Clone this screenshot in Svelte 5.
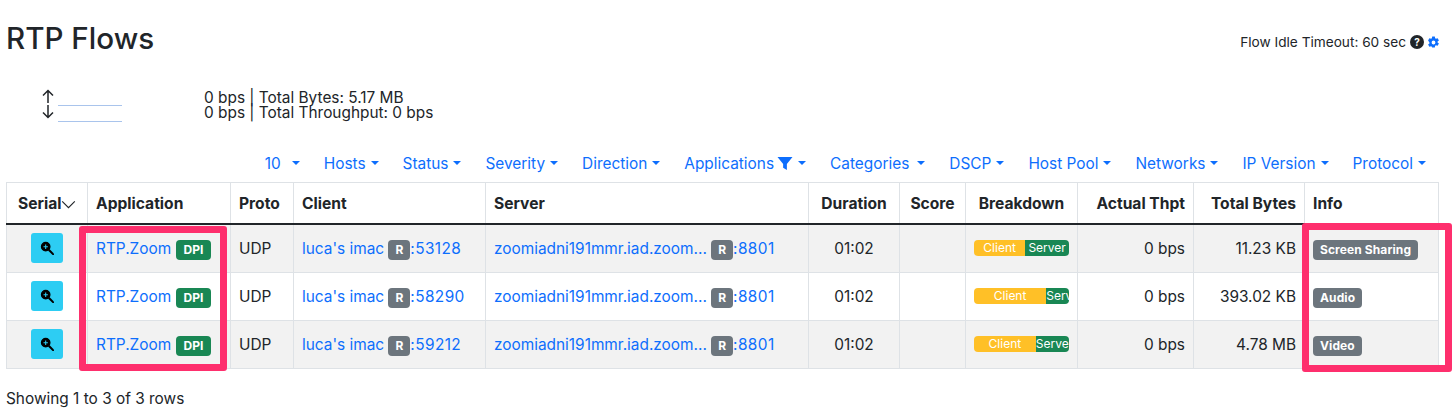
<script lang="ts">
    const filters = [
        { label: "10", caret: "ten" },
        { label: "Hosts" },
        { label: "Status" },
        { label: "Severity" },
        { label: "Direction" },
        { label: "Applications", funnel: true },
        { label: "Categories", caret: "cat" },
        { label: "DSCP" },
        { label: "Host Pool" },
        { label: "Networks" },
        { label: "IP Version" },
        { label: "Protocol" },
    ];

    const rows = [
        { cport: "53128", client: 54, bytes: "11.23 KB", info: "Screen Sharing" },
        { cport: "58290", client: 76, bytes: "393.02 KB", info: "Audio" },
        { cport: "59212", client: 65, bytes: "4.78 MB", info: "Video" },
    ];

    const columns = [81, 143, 63, 192, 323, 91, 66, 112, 116, 111, 134];
</script>

<main class="page">
    <header class="top">
        <h1>RTP Flows</h1>
        <div class="idle">
            <span>Flow Idle Timeout: 60 sec</span>
            <span class="help">?</span>
            <svg class="gear" viewBox="0 0 24 24" width="13" height="13">
                <path fill="#0d6efd" fill-rule="evenodd" d="M9.6 1h4.8l.6 3.2 1.6.9 3-1.1 2.4 4.1-2.5 2.1v1.6l2.5 2.1-2.4 4.1-3-1.1-1.6.9-.6 3.2H9.6L9 19.800l-1.600-.9-3 1.100L2 15.900l2.500-2.100v-1.600L2 8.100 4.400 4l3 1.100L9 4.200zM12 8.500a3.500 3.500 0 1 0 0 7 3.500 3.500 0 0 0 0-7z"/>
            </svg>
        </div>
    </header>

    <section class="stats">
        <div class="arrows">
            <svg viewBox="0 0 12 30" width="12" height="30">
                <path d="M6 14V1.500M1 6.500l5-5 5 5M6 16v12.500M1 23.500l5 5 5-5" fill="none" stroke="#212529" stroke-width="1.500"/>
            </svg>
            <div class="sparks"><i></i><i></i></div>
        </div>
        <div class="totals">
            <div>0 bps | Total Bytes: 5.17 MB</div>
            <div>0 bps | Total Throughput: 0 bps</div>
        </div>
    </section>

    <nav class="filters">
        {#each filters as f}
            <span class="filter">
                {f.label}
                {#if f.funnel}
                    <svg viewBox="0 0 16 16" width="16" height="15" class="funnel">
                        <path fill="#0d6efd" d="M0 1h16L10 8.500V15L6 12.500V8.500z"/>
                    </svg>
                {/if}
                <i class="caret {f.caret ?? ''}"></i>
            </span>
        {/each}
    </nav>

    <table>
        <colgroup>
            {#each columns as w}
                <col style="width: {w}px" />
            {/each}
        </colgroup>
        <thead>
            <tr>
                <th class="serial">
                    Serial<svg viewBox="0 0 16 10" width="15" height="9"><path d="M1 1.500 8 8.500l7-7" fill="none" stroke="#212529" stroke-width="1.300"/></svg>
                </th>
                <th>Application</th>
                <th>Proto</th>
                <th>Client</th>
                <th>Server</th>
                <th class="center">Duration</th>
                <th class="center">Score</th>
                <th class="center">Breakdown</th>
                <th class="right">Actual Thpt</th>
                <th class="right">Total Bytes</th>
                <th>Info</th>
            </tr>
        </thead>
        <tbody>
            {#each rows as r}
                <tr>
                    <td class="center">
                        <span class="zoom">
                            <svg viewBox="0 0 16 16" width="14" height="14">
                                <circle cx="6.500" cy="6.500" r="4.800" fill="#000" stroke="#000" stroke-width="1.500"/>
                                <path d="M10.500 10.500 15 15" stroke="#000" stroke-width="2.400" stroke-linecap="round"/>
                                <path d="M4 6.500h5M6.500 4v5" stroke="#2dcdf3" stroke-width="1.200"/>
                            </svg>
                        </span>
                    </td>
                    <td><a href="#top">RTP.Zoom</a> <span class="badge green">DPI</span></td>
                    <td>UDP</td>
                    <td><a href="#top">luca's imac</a> <span class="badge gray">R</span><a href="#top" class="port">:{r.cport}</a></td>
                    <td><a href="#top">zoomiadni191mmr.iad.zoom...</a> <span class="badge gray">R</span><a href="#top" class="port">:8801</a></td>
                    <td class="center">01:02</td>
                    <td></td>
                    <td class="center">
                        <div class="bar">
                            <span class="client" style="width: {r.client}%">Client</span>
                            <span class="server">Server</span>
                        </div>
                    </td>
                    <td class="right">0 bps</td>
                    <td class="right">{r.bytes}</td>
                    <td><span class="badge gray info">{r.info}</span></td>
                </tr>
            {/each}
        </tbody>
    </table>

    <p class="showing">Showing 1 to 3 of 3 rows</p>

    <!-- annotation frames drawn over the table -->
    <div class="mark mark-app"></div>
    <div class="mark mark-info"></div>
</main>

<style>
    :global(body) {
        margin: 0;
        background: #fff;
    }

    .page {
        position: relative;
        height: 419px;
        padding: 0 6px;
        box-sizing: border-box;
        overflow: hidden;
        font-family: Inter, "Liberation Sans", sans-serif;
        font-size: 15.400px;
        color: #212529;
    }

    .top {
        display: flex;
        align-items: center;
        justify-content: space-between;
        padding-top: 19px;
        height: 38px;
    }

    h1 {
        margin: 0;
        font-size: 29.600px;
        font-weight: 500;
        line-height: 38px;
    }

    .idle {
        display: flex;
        align-items: center;
        gap: 4px;
        margin: 8px 7px 0 0;
        font-size: 13.650px;
    }

    .help {
        width: 14px;
        height: 14px;
        border-radius: 50%;
        background: #212529;
        color: #fff;
        font-size: 10px;
        font-weight: 700;
        line-height: 14px;
        text-align: center;
    }

    .gear {
        margin-left: -1px;
    }

    .stats {
        display: flex;
        margin-top: 32px;
        height: 62px;
    }

    .arrows {
        display: flex;
        align-items: flex-start;
        width: 198px;
        padding: 0 0 0 36px;
        box-sizing: border-box;
    }

    .sparks {
        display: flex;
        flex-direction: column;
        gap: 15px;
        width: 64px;
        margin: 16px 0 0 4px;
    }

    .sparks i {
        display: block;
        height: 1px;
        background: #a9c4ec;
    }

    .totals {
        padding-top: 1px;
        line-height: 15px;
    }

    .filters {
        display: flex;
        justify-content: flex-end;
        gap: 24px;
        height: 24px;
        padding-right: 21px;
        align-items: center;
        color: #0d6efd;
    }

    .filter {
        display: flex;
        align-items: center;
    }

    .funnel {
        margin-left: 3px;
    }

    .caret {
        display: inline-block;
        margin-left: 5px;
        border-top: 4px solid;
        border-left: 4px solid transparent;
        border-right: 4px solid transparent;
    }

    .caret.ten {
        margin-left: 11px;
    }

    .caret.cat {
        margin-left: 8px;
    }

    table {
        width: 1432px;
        margin-top: 7px;
        table-layout: fixed;
        border-collapse: collapse;
    }

    th,
    td {
        border: 1px solid #dee2e6;
        padding: 0 8px;
        white-space: nowrap;
        overflow: hidden;
        text-align: left;
    }

    th {
        height: 40px;
        font-size: 15.600px;
        font-weight: 700;
        border-bottom: 2.500px solid #212529;
    }

    td {
        height: 47px;
    }

    tbody tr:nth-child(odd) td {
        background: #f2f2f2;
    }

    .center {
        text-align: center;
    }

    .right {
        text-align: right;
    }

    .serial {
        padding: 0 0 0 11px;
    }

    a {
        color: #0d6efd;
        text-decoration: none;
    }

    .port {
        letter-spacing: 0.400px;
    }

    .zoom {
        display: inline-flex;
        width: 32px;
        height: 30px;
        margin-bottom: 2px;
        border-radius: 3px;
        align-items: center;
        justify-content: center;
        background: #2dcdf3;
        vertical-align: middle;
    }

    .badge {
        display: inline-block;
        padding: 0 7px;
        height: 20px;
        margin: -4px 0;
        line-height: 20px;
        border-radius: 4px;
        color: #fff;
        font-size: 12px;
        font-weight: 700;
        vertical-align: 0;
    }

    .green {
        background: #198754;
        padding: 0 8px;
    }

    .gray {
        background: #6c757d;
    }

    .info {
        letter-spacing: 0.100px;
    }

    .bar {
        display: flex;
        height: 16px;
        margin: -2px auto 0;
        width: 95px;
        border-radius: 4px;
        overflow: hidden;
        color: #fff;
        font-size: 12px;
        line-height: 15px;
    }

    .client {
        background: #ffc027;
        text-align: center;
        flex: none;
    }

    .server {
        flex: 1;
        min-width: 0;
        overflow: hidden;
        background: #198754;
        text-align: center;
    }

    .showing {
        margin: 20px 0 0;
    }

    .mark {
        position: absolute;
        box-sizing: border-box;
        border: 7px solid #fe2f6d;
        border-radius: 3px;
    }

    .mark-app {
        left: 79px;
        top: 226px;
        width: 148px;
        height: 145px;
    }

    .mark-info {
        left: 1302px;
        top: 223px;
        width: 150px;
        height: 149px;
    }
</style>
